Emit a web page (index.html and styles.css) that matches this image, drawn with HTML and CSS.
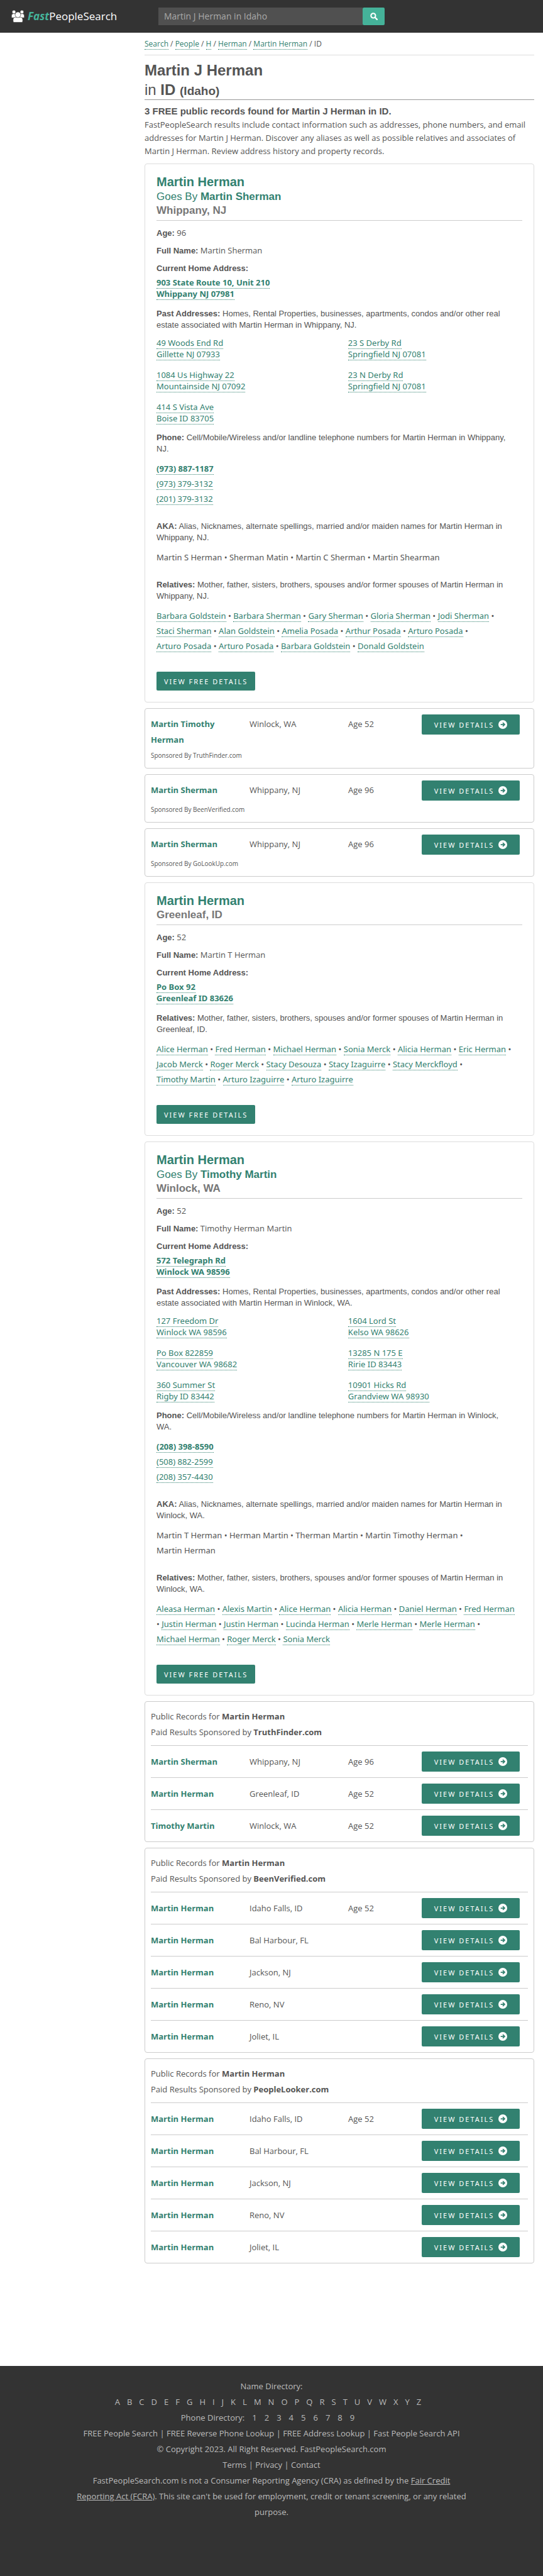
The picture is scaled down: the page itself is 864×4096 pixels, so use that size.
FILE: index.html
```html
<!DOCTYPE html>
<html lang="en">
<head>
<meta charset="utf-8">
<title>Martin J Herman in Idaho - FastPeopleSearch</title>
<link rel="stylesheet" href="styles.css">
</head>
<body>
<svg width="0" height="0" class="defs" aria-hidden="true">
  <symbol id="arrow" viewBox="0 0 16 16"><circle cx="8" cy="8" r="8" fill="#fff"/><path d="M4.200 8h7M8 4.600 11.400 8 8 11.400" fill="none" stroke="#328170" stroke-width="2"/></symbol>
</svg>
<header class="top">
  <a class="logo" href="#">
    <svg viewBox="0 0 66 62" width="21" height="20" aria-hidden="true" fill="#fff" stroke="#333" stroke-width="2"><circle cx="13" cy="9" r="9"/><circle cx="53" cy="9" r="9"/><path d="M1 38v-10q0-11 12-11t12 11v10zM41 38v-10q0-11 12-11t12 11v10z"/><path d="M9 56v-9q0-12 12-12h24q12 0 12 12v9q0 5-6 5h-36q-6 0-6-5z"/><circle cx="33" cy="23" r="14"/></svg>
    <span class="brand"><b>Fast</b>PeopleSearch</span>
  </a>
  <form class="search">
    <input type="text" aria-label="Search" value="Martin J Herman in Idaho">
    <button type="button" aria-label="Search"><svg viewBox="0 0 16 16" width="12" height="12"><circle cx="6.500" cy="6.500" r="4.800" fill="none" stroke="#fff" stroke-width="2.800"/><path d="m10 10 4.500 4.500" stroke="#fff" stroke-width="3" stroke-linecap="round"/></svg></button>
  </form>
</header>
<main class="content">
  <nav class="crumbs"><a href="#">Search</a> / <a href="#">People</a> / <a href="#">H</a> / <a href="#">Herman</a> / <a href="#">Martin Herman</a> / ID</nav>
  <h1><b>Martin J Herman</b><br>in <b>ID <small>(Idaho)</small></b></h1>
  <h2 class="found">3 FREE public records found for Martin J Herman in ID.</h2>
  <p class="intro">FastPeopleSearch results include contact information such as addresses, phone numbers, and email addresses for Martin J Herman. Discover any aliases as well as possible relatives and associates of Martin J Herman. Review address history and property records.</p>

  <article class="card">
    <h2 class="title">Martin Herman <span class="alias">Goes By <b>Martin Sherman</b></span> <span class="city">Whippany, NJ</span></h2>
    <p class="fact"><b>Age:</b> 96</p>
    <p class="fact"><b>Full Name:</b> Martin Sherman</p>
    <p class="fact"><b>Current Home Address:</b></p>
    <p class="current"><a href="#">903 State Route 10, Unit 210<br>Whippany NJ 07981</a></p>
    <h3><b>Past Addresses:</b> Homes, Rental Properties, businesses, apartments, condos and/or other real estate associated with Martin Herman in Whippany, NJ.</h3>
    <div class="addresses">
      <p><a href="#">49 Woods End Rd<br>Gillette NJ 07933</a></p><p><a href="#">23 S Derby Rd<br>Springfield NJ 07081</a></p>
      <p><a href="#">1084 Us Highway 22<br>Mountainside NJ 07092</a></p><p><a href="#">23 N Derby Rd<br>Springfield NJ 07081</a></p>
      <p><a href="#">414 S Vista Ave<br>Boise ID 83705</a></p>
    </div>
    <h3><b>Phone:</b> Cell/Mobile/Wireless and/or landline telephone numbers for Martin Herman in Whippany,<br>NJ.</h3>
    <p class="list"><a href="#"><b>(973) 887-1187</b></a><br><a href="#">(973) 379-3132</a><br><a href="#">(201) 379-3132</a></p>
    <h3><b>AKA:</b> Alias, Nicknames, alternate spellings, married and/or maiden names for Martin Herman in Whippany, NJ.</h3>
    <p class="list">Martin S Herman • Sherman Matin • Martin C Sherman • Martin Shearman</p>
    <h3><b>Relatives:</b> Mother, father, sisters, brothers, spouses and/or former spouses of Martin Herman in Whippany, NJ.</h3>
    <p class="list"><a href="#">Barbara Goldstein</a> • <a href="#">Barbara Sherman</a> • <a href="#">Gary Sherman</a> • <a href="#">Gloria Sherman</a> • <a href="#">Jodi Sherman</a> • <br><a href="#">Staci Sherman</a> • <a href="#">Alan Goldstein</a> • <a href="#">Amelia Posada</a> • <a href="#">Arthur Posada</a> • <a href="#">Arturo Posada</a> • <br><a href="#">Arturo Posada</a> • <a href="#">Arturo Posada</a> • <a href="#">Barbara Goldstein</a> • <a href="#">Donald Goldstein</a></p>
    <a class="btn free" href="#">View Free Details</a>
  </article>

  <section class="card ad single">
    <div class="row"><a class="name" href="#">Martin Timothy Herman</a><span>Winlock, WA</span><span>Age 52</span><a class="btn" href="#">View Details <svg><use href="#arrow"/></svg></a></div>
    <p class="by">Sponsored By TruthFinder.com</p>
  </section>
  <section class="card ad single">
    <div class="row"><a class="name" href="#">Martin Sherman</a><span>Whippany, NJ</span><span>Age 96</span><a class="btn" href="#">View Details <svg><use href="#arrow"/></svg></a></div>
    <p class="by">Sponsored By BeenVerified.com</p>
  </section>
  <section class="card ad single">
    <div class="row"><a class="name" href="#">Martin Sherman</a><span>Whippany, NJ</span><span>Age 96</span><a class="btn" href="#">View Details <svg><use href="#arrow"/></svg></a></div>
    <p class="by">Sponsored By GoLookUp.com</p>
  </section>

  <article class="card">
    <h2 class="title">Martin Herman <span class="city">Greenleaf, ID</span></h2>
    <p class="fact"><b>Age:</b> 52</p>
    <p class="fact"><b>Full Name:</b> Martin T Herman</p>
    <p class="fact"><b>Current Home Address:</b></p>
    <p class="current"><a href="#">Po Box 92<br>Greenleaf ID 83626</a></p>
    <h3><b>Relatives:</b> Mother, father, sisters, brothers, spouses and/or former spouses of Martin Herman in Greenleaf, ID.</h3>
    <p class="list"><a href="#">Alice Herman</a> • <a href="#">Fred Herman</a> • <a href="#">Michael Herman</a> • <a href="#">Sonia Merck</a> • <a href="#">Alicia Herman</a> • <a href="#">Eric Herman</a> • <br><a href="#">Jacob Merck</a> • <a href="#">Roger Merck</a> • <a href="#">Stacy Desouza</a> • <a href="#">Stacy Izaguirre</a> • <a href="#">Stacy Merckfloyd</a> • <br><a href="#">Timothy Martin</a> • <a href="#">Arturo Izaguirre</a> • <a href="#">Arturo Izaguirre</a></p>
    <a class="btn free" href="#">View Free Details</a>
  </article>

  <article class="card">
    <h2 class="title">Martin Herman <span class="alias">Goes By <b>Timothy Martin</b></span> <span class="city">Winlock, WA</span></h2>
    <p class="fact"><b>Age:</b> 52</p>
    <p class="fact"><b>Full Name:</b> Timothy Herman Martin</p>
    <p class="fact"><b>Current Home Address:</b></p>
    <p class="current"><a href="#">572 Telegraph Rd<br>Winlock WA 98596</a></p>
    <h3><b>Past Addresses:</b> Homes, Rental Properties, businesses, apartments, condos and/or other real estate associated with Martin Herman in Winlock, WA.</h3>
    <div class="addresses">
      <p><a href="#">127 Freedom Dr<br>Winlock WA 98596</a></p><p><a href="#">1604 Lord St<br>Kelso WA 98626</a></p>
      <p><a href="#">Po Box 822859<br>Vancouver WA 98682</a></p><p><a href="#">13285 N 175 E<br>Ririe ID 83443</a></p>
      <p><a href="#">360 Summer St<br>Rigby ID 83442</a></p><p><a href="#">10901 Hicks Rd<br>Grandview WA 98930</a></p>
    </div>
    <h3><b>Phone:</b> Cell/Mobile/Wireless and/or landline telephone numbers for Martin Herman in Winlock,<br>WA.</h3>
    <p class="list"><a href="#"><b>(208) 398-8590</b></a><br><a href="#">(508) 882-2599</a><br><a href="#">(208) 357-4430</a></p>
    <h3><b>AKA:</b> Alias, Nicknames, alternate spellings, married and/or maiden names for Martin Herman in Winlock, WA.</h3>
    <p class="list">Martin T Herman • Herman Martin • Therman Martin • Martin Timothy Herman • <br>Martin Herman</p>
    <h3><b>Relatives:</b> Mother, father, sisters, brothers, spouses and/or former spouses of Martin Herman in Winlock, WA.</h3>
    <p class="list"><a href="#">Aleasa Herman</a> • <a href="#">Alexis Martin</a> • <a href="#">Alice Herman</a> • <a href="#">Alicia Herman</a> • <a href="#">Daniel Herman</a> • <a href="#">Fred Herman</a><br>• <a href="#">Justin Herman</a> • <a href="#">Justin Herman</a> • <a href="#">Lucinda Herman</a> • <a href="#">Merle Herman</a> • <a href="#">Merle Herman</a> • <br><a href="#">Michael Herman</a> • <a href="#">Roger Merck</a> • <a href="#">Sonia Merck</a></p>
    <a class="btn free" href="#">View Free Details</a>
  </article>

  <section class="card ad">
    <p class="head">Public Records for <b>Martin Herman</b><br>Paid Results Sponsored by <b>TruthFinder.com</b></p>
    <div class="row"><a class="name" href="#">Martin Sherman</a><span>Whippany, NJ</span><span>Age 96</span><a class="btn" href="#">View Details <svg><use href="#arrow"/></svg></a></div>
    <div class="row"><a class="name" href="#">Martin Herman</a><span>Greenleaf, ID</span><span>Age 52</span><a class="btn" href="#">View Details <svg><use href="#arrow"/></svg></a></div>
    <div class="row"><a class="name" href="#">Timothy Martin</a><span>Winlock, WA</span><span>Age 52</span><a class="btn" href="#">View Details <svg><use href="#arrow"/></svg></a></div>
  </section>
  <section class="card ad">
    <p class="head">Public Records for <b>Martin Herman</b><br>Paid Results Sponsored by <b>BeenVerified.com</b></p>
    <div class="row"><a class="name" href="#">Martin Herman</a><span>Idaho Falls, ID</span><span>Age 52</span><a class="btn" href="#">View Details <svg><use href="#arrow"/></svg></a></div>
    <div class="row"><a class="name" href="#">Martin Herman</a><span>Bal Harbour, FL</span><span></span><a class="btn" href="#">View Details <svg><use href="#arrow"/></svg></a></div>
    <div class="row"><a class="name" href="#">Martin Herman</a><span>Jackson, NJ</span><span></span><a class="btn" href="#">View Details <svg><use href="#arrow"/></svg></a></div>
    <div class="row"><a class="name" href="#">Martin Herman</a><span>Reno, NV</span><span></span><a class="btn" href="#">View Details <svg><use href="#arrow"/></svg></a></div>
    <div class="row"><a class="name" href="#">Martin Herman</a><span>Joliet, IL</span><span></span><a class="btn" href="#">View Details <svg><use href="#arrow"/></svg></a></div>
  </section>
  <section class="card ad">
    <p class="head">Public Records for <b>Martin Herman</b><br>Paid Results Sponsored by <b>PeopleLooker.com</b></p>
    <div class="row"><a class="name" href="#">Martin Herman</a><span>Idaho Falls, ID</span><span>Age 52</span><a class="btn" href="#">View Details <svg><use href="#arrow"/></svg></a></div>
    <div class="row"><a class="name" href="#">Martin Herman</a><span>Bal Harbour, FL</span><span></span><a class="btn" href="#">View Details <svg><use href="#arrow"/></svg></a></div>
    <div class="row"><a class="name" href="#">Martin Herman</a><span>Jackson, NJ</span><span></span><a class="btn" href="#">View Details <svg><use href="#arrow"/></svg></a></div>
    <div class="row"><a class="name" href="#">Martin Herman</a><span>Reno, NV</span><span></span><a class="btn" href="#">View Details <svg><use href="#arrow"/></svg></a></div>
    <div class="row"><a class="name" href="#">Martin Herman</a><span>Joliet, IL</span><span></span><a class="btn" href="#">View Details <svg><use href="#arrow"/></svg></a></div>
  </section>
</main>
<footer class="foot">
  <p>Name Directory:</p>
  <nav class="letters"><a href="#">A</a><a href="#">B</a><a href="#">C</a><a href="#">D</a><a href="#">E</a><a href="#">F</a><a href="#">G</a><a href="#">H</a><a href="#">I</a><a href="#">J</a><a href="#">K</a><a href="#">L</a><a href="#">M</a><a href="#">N</a><a href="#">O</a><a href="#">P</a><a href="#">Q</a><a href="#">R</a><a href="#">S</a><a href="#">T</a><a href="#">U</a><a href="#">V</a><a href="#">W</a><a href="#">X</a><a href="#">Y</a><a href="#">Z</a></nav>
  <nav class="letters digits"><span>Phone Directory:</span><a href="#">1</a><a href="#">2</a><a href="#">3</a><a href="#">4</a><a href="#">5</a><a href="#">6</a><a href="#">7</a><a href="#">8</a><a href="#">9</a></nav>
  <p><a href="#">FREE People Search</a> | <a href="#">FREE Reverse Phone Lookup</a> | <a href="#">FREE Address Lookup</a> | <a href="#">Fast People Search API</a></p>
  <p>© Copyright 2023. All Right Reserved. FastPeopleSearch.com</p>
  <p><a href="#">Terms</a> | <a href="#">Privacy</a> | <a href="#">Contact</a></p>
  <p>FastPeopleSearch.com is not a Consumer Reporting Agency (CRA) as defined by the <a class="law" href="#">Fair Credit<br>Reporting Act (FCRA)</a>. This site can't be used for employment, credit or tenant screening, or any related purpose.</p>
</footer>
</body>
</html>
```
FILE: styles.css
```css
* { box-sizing: border-box; }
body {
  margin: 0;
  min-height: 100vh;
  display: flex;
  flex-direction: column;
  font: 13px/21px "Open Sans", "Noto Sans", sans-serif;
  color: #555;
  background: #fff;
}
p, h1, h2, h3 { margin: 0; }
.defs { display: none; }
a { color: #328170; text-decoration: none; }

.top { display: flex; align-items: center; height: 52px; background: #333; }
.logo { display: flex; align-items: center; gap: 5px; width: 252px; padding-left: 18px; }
.brand { font-size: 17px; line-height: 24px; color: #fff; }
.brand b { font-style: italic; color: #45b299; }
.search { display: flex; width: 360px; height: 28px; }
.search input {
  flex: 1;
  min-width: 0;
  padding: 0 9px;
  border: 0;
  background: #505050;
  color: #aaa;
  font: 14px/20px "Open Sans", "Noto Sans", sans-serif;
}
.search button {
  display: flex;
  align-items: center;
  justify-content: center;
  width: 35px;
  padding: 0;
  border: 0;
  border-radius: 2px;
  background: #45b299;
}

.content { display: flex; flex-direction: column; gap: 9px; margin: 0 14px 0 230px; }
.crumbs { padding: 7px 0; margin-bottom: -9px; border-bottom: 1px solid #ddd; font-size: 12px; }
.crumbs a, .card p a { border-bottom: 1px dotted #328170; }
h1, .found, .title, h3, .fact b { font-family: "Liberation Sans", Arial, sans-serif; }
h1 { padding-top: 8px; border-bottom: 1px solid #999; font-size: 24px; line-height: 31px; font-weight: 400; }
h1 small { font-size: 19px; line-height: 20px; }
.found { font-size: 15px; line-height: 18px; margin-bottom: -7px; }

.card { border: 1px solid #ddd; border-radius: 4px; padding: 17px 18px 18px; }
.title { display: flex; flex-direction: column; border-bottom: 1px solid #ccc; padding-bottom: 4px; margin-bottom: 9px; font-size: 20px; line-height: 23px; color: #328170; }
.title .alias { font-size: 17px; line-height: 23px; font-weight: 400; }
.title .city { font-size: 17px; line-height: 22px; color: #777; }
.fact { line-height: 20px; margin-bottom: 8px; }
.fact b { line-height: 14px; }
.current, .addresses, .list, .btn { font-family: "Noto Sans", "Open Sans", sans-serif; }
.current { font-weight: 700; line-height: 18px; margin: -4px 0 14px; }
h3 { font-size: 13px; line-height: 18px; font-weight: 400; margin-bottom: 10px; }
.addresses { display: grid; grid-template-columns: 11fr 10fr; row-gap: 15px; line-height: 18px; margin-bottom: 13px; }
.list { line-height: 24px; margin: 0 0 23px; }
.btn {
  display: flex;
  align-items: center;
  justify-content: center;
  gap: 7px;
  height: 32px;
  border-radius: 2px;
  background: #328170;
  color: #fff;
  font-size: 11px;
  letter-spacing: 2px;
  text-transform: uppercase;
}
.btn svg { width: 14px; height: 14px; }
.free { width: fit-content; height: 30px; padding: 0 12px; margin-top: 29px; }

.ad { border-color: #ccc; padding: 11px 9px 0; line-height: 25px; }
.row { display: grid; grid-template-columns: 157px 157px 1fr 156px; align-items: center; padding: 9px 13px 9px 0; border-top: 1px solid #ccc; }
.name { font-weight: 700; }
.head { padding-bottom: 8px; }
.single { padding: 9px 9px 7px; }
.single .row { align-items: start; min-height: 34px; border: 0; padding: 0 13px 0 0; }
.single .name, .single span { padding-top: 3px; }
.by { font-size: 10px; }

.foot { flex: 1; margin-top: 163px; padding: 20px 115px 0; background: #333; color: #bbb; line-height: 25px; text-align: center; }
.foot a { color: inherit; }
.foot .law { text-decoration: underline; }
.letters { display: flex; justify-content: center; }
.letters a { padding-right: 11px; }
.digits a, .digits span { padding-right: 12px; }
```
